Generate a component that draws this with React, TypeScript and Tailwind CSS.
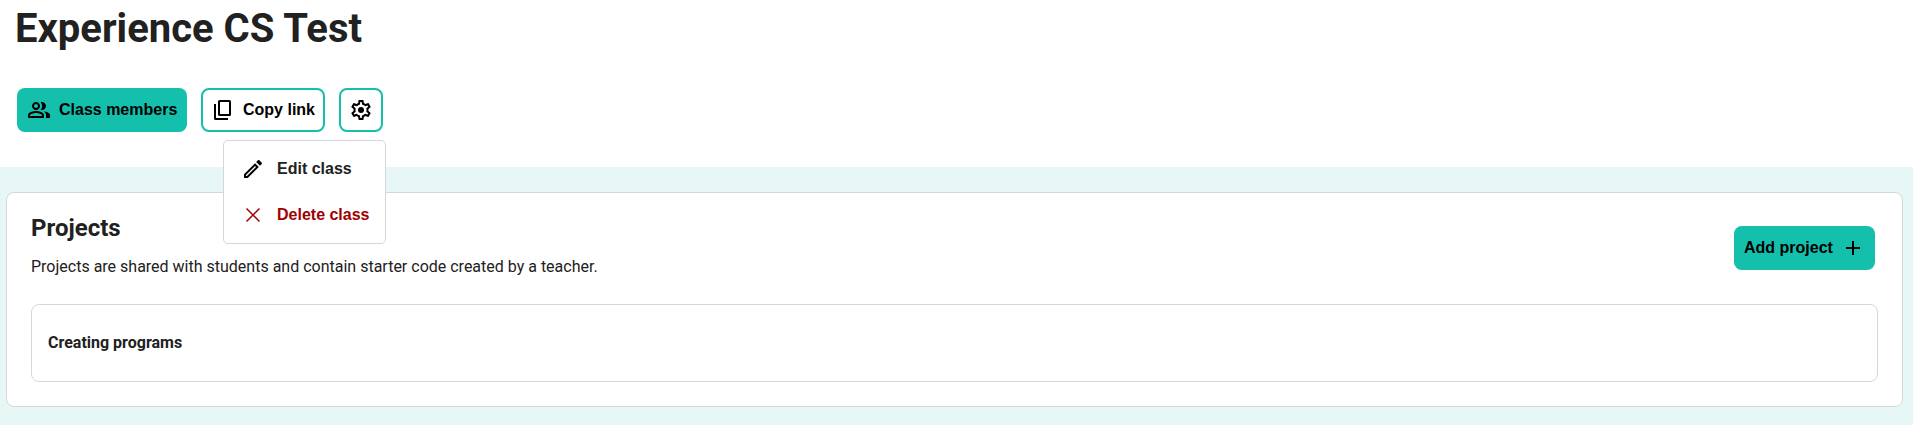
import React from "react";
import { MdOutlinePeopleAlt, MdOutlineEdit, MdAdd } from "react-icons/md";

function CopyIcon() {
  return (
    <svg width="24" height="24" viewBox="0 0 24 24" fill="currentColor">
      <path d="M8.500 2h10A1.500 1.500 0 0 1 20 3.500v13a1.500 1.500 0 0 1-1.500 1.500h-10A1.500 1.500 0 0 1 7 16.500v-13A1.500 1.500 0 0 1 8.500 2zM9 4v12h9V4H9z" />
      <path d="M3 6v14.500A1.500 1.500 0 0 0 4.500 22H17v-2H5V6H3z" />
    </svg>
  );
}

function GearIcon() {
  return (
    <svg width="24" height="24" viewBox="0 0 24 24" fill="currentColor">
      <path d="M19.43 12.98c.04-.32.07-.64.07-.98 0-.34-.03-.66-.07-.98l2.11-1.65c.19-.15.24-.42.12-.64l-2-3.46c-.09-.16-.26-.25-.44-.25-.06 0-.12.01-.17.03l-2.49 1c-.52-.4-1.08-.73-1.69-.98l-.38-2.65C14.46 2.18 14.25 2 14 2h-4c-.25 0-.46.18-.49.42l-.38 2.65c-.61.25-1.17.59-1.69.98l-2.49-1c-.06-.02-.12-.03-.18-.03-.17 0-.34.09-.43.25l-2 3.46c-.13.22-.07.49.12.64l2.11 1.65c-.04.32-.07.65-.07.98 0 .33.03.66.07.98l-2.11 1.65c-.19.15-.24.42-.12.64l2 3.46c.09.16.26.25.44.25.06 0 .12-.01.17-.03l2.49-1c.52.4 1.08.73 1.69.98l.38 2.65c.03.24.24.42.49.42h4c.25 0 .46-.18.49-.42l.38-2.65c.61-.25 1.17-.59 1.69-.98l2.49 1c.06.02.12.03.18.03.17 0 .34-.09.43-.25l2-3.46c.12-.22.07-.49-.12-.64l-2.11-1.65zm-1.98-1.71c.04.31.05.52.05.73 0 .21-.02.43-.05.73l-.14 1.13.89.7 1.08.84-.7 1.21-1.27-.51-1.04-.42-.9.68c-.43.32-.84.56-1.25.73l-1.06.43-.16 1.13-.2 1.35h-1.4l-.19-1.35-.16-1.13-1.06-.43c-.43-.18-.83-.41-1.23-.71l-.91-.7-1.06.43-1.27.51-.7-1.21 1.08-.84.89-.7-.14-1.13c-.03-.31-.05-.54-.05-.74s.02-.43.05-.73l.14-1.13-.89-.7-1.08-.84.7-1.21 1.27.51 1.04.42.9-.68c.43-.32.84-.56 1.25-.73l1.06-.43.16-1.13.2-1.35h1.39l.19 1.35.16 1.13 1.06.43c.43.18.83.41 1.23.71l.91.7 1.06-.43 1.27-.51.7 1.21-1.07.85-.89.7.14 1.13z" />
      <circle cx="12" cy="12" r="3" />
    </svg>
  );
}

function CrossIcon() {
  return (
    <svg width="24" height="24" viewBox="0 0 24 24" fill="none" stroke="currentColor" strokeWidth="1.5">
      <path d="M5.500 5.500l13 13M18.500 5.500l-13 13" />
    </svg>
  );
}

export default function App() {
  return (
    <div className="relative h-[425px] overflow-hidden bg-white font-['Roboto',sans-serif] text-[#212121]">
      <div className="h-[167px] px-[15px] pt-[4px]">
        <h1 className="text-[40px] leading-[50px] font-bold">Experience CS Test</h1>
        <div className="mt-[34px] ml-[2px] flex gap-[14px] font-['Liberation_Sans',sans-serif] text-[16px] font-bold text-black">
          <button className="flex h-[44px] w-[170px] items-center gap-[8px] rounded-[8px] bg-[#14bfac] pl-[10px]">
            <MdOutlinePeopleAlt size={24} />
            <span>Class members</span>
          </button>
          <button className="flex h-[44px] w-[124px] items-center gap-[8px] rounded-[8px] border-2 border-[#14bfac] pl-[8px]">
            <CopyIcon />
            <span>Copy link</span>
          </button>
          <button className="flex h-[44px] w-[44px] items-center justify-center rounded-[8px] border-2 border-[#14bfac]">
            <GearIcon />
          </button>
        </div>
      </div>

      <div className="h-[258px] bg-[#e7f7f5] pt-[25px] pr-[10px] pl-[6px]">
        <div className="h-[215px] rounded-[8px] border border-[#d5d7dc] bg-white px-[24px] pt-[19px]">
          <div className="flex items-start justify-between">
            <div>
              <h2 className="text-[24px] leading-[32px] font-bold">Projects</h2>
              <p className="mt-[11px] text-[16px] leading-[24px]">
                Projects are shared with students and contain starter code created by a teacher.
              </p>
            </div>
            <button className="mt-[14px] mr-[3px] flex h-[44px] w-[141px] items-center gap-[8px] rounded-[8px] bg-[#14bfac] pl-[10px] font-['Liberation_Sans',sans-serif] text-[16px] font-bold text-black">
              <span>Add project</span>
              <MdAdd size={24} />
            </button>
          </div>
          <div className="mt-[25px] flex h-[78px] items-center rounded-[8px] border border-[#d5d7dc] px-[16px] text-[16px] font-bold">
            Creating programs
          </div>
        </div>
      </div>

      <div className="absolute top-[140px] left-[223px] flex h-[104px] w-[163px] flex-col rounded-[5px] border border-[#d5d7dc] bg-white pt-[5px] font-['Liberation_Sans',sans-serif] text-[16px] font-bold">
        <div className="flex h-[46px] items-center gap-[12px] pl-[17px]">
          <MdOutlineEdit size={24} className="text-black" />
          <span>Edit class</span>
        </div>
        <div className="flex h-[46px] items-center gap-[12px] pl-[17px] text-[#a00000]">
          <CrossIcon />
          <span>Delete class</span>
        </div>
      </div>
    </div>
  );
}
